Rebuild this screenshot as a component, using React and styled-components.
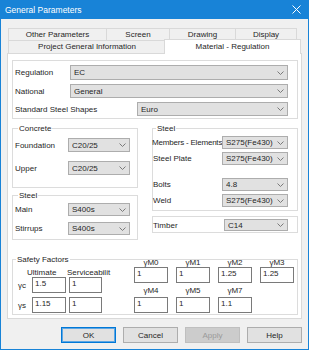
import React from 'react';
import styled, { createGlobalStyle } from 'styled-components';

const FONT = '"Liberation Sans", Arial, sans-serif'

const GlobalStyle = createGlobalStyle`
  html, body {
    margin: 0;
    padding: 0;
    background: #ffffff;
  }
  body {
    font-family: ${FONT};
    font-size: 8px;
    color: #262626;
  }
  * {
    box-sizing: border-box;
  }
`

const Chevron = () => (
  <svg width="7" height="4" viewBox="0 0 7 4">
    <polyline points="0.5,0.5 3.5,3.5 6.5,0.5" fill="none" stroke="#7a7a7a" strokeWidth="1" />
  </svg>
)

const CloseIcon = () => (
  <svg width="9" height="9" viewBox="0 0 9 9">
    <path d="M0.5 0.5 L8.5 8.5 M8.5 0.5 L0.5 8.5" stroke="#fff" strokeWidth="1" />
  </svg>
)

const Select = ({ value, w, h }) => (
  <Combo $w={w} $h={h}>
    <ComboValue>{value}</ComboValue>
    <ComboArrow><Chevron /></ComboArrow>
  </Combo>
)

const App = () => {
  return (
    <>
      <GlobalStyle />
      <Window>
        <TitleBar>
          <span>General Parameters</span>
          <CloseButton><CloseIcon /></CloseButton>
        </TitleBar>
        <Body>
          <Tabs>
            <TabRow>
              <Tab $w={99}>Other Parameters</Tab>
              <Tab $w={64}>Screen</Tab>
              <Tab $w={67}>Drawing</Tab>
              <Tab $w={62}>Display</Tab>
            </TabRow>
            <TabRow>
              <Tab $w={158} $h={13}>Project General Information</Tab>
              <Tab $w={137} $h={13} $active>Material - Regulation</Tab>
            </TabRow>
          </Tabs>
          <Panel>
            <Box>
              <FormRow>
                <Label $w={55}>Regulation</Label>
                <Select value="EC" h={15} />
              </FormRow>
              <FormRow $mt={4}>
                <Label $w={55}>National</Label>
                <Select value="General" />
              </FormRow>
              <FormRow $mt={4}>
                <Label>Standard Steel Shapes</Label>
                <Select value="Euro" w={151} />
              </FormRow>
            </Box>

            <Columns>
              <Column>
                <Group $pad="5px 7px 12px 2px">
                  <Legend>Concrete</Legend>
                  <FormRow>
                    <Label>Foundation</Label>
                    <Select value="C20/25" w={62} />
                  </FormRow>
                  <FormRow $mt={9}>
                    <Label>Upper</Label>
                    <Select value="C20/25" w={62} />
                  </FormRow>
                </Group>
                <Group $pad="3px 7px 4px 2px" $mt={3}>
                  <Legend>Steel</Legend>
                  <FormRow>
                    <Label>Main</Label>
                    <Select value="S400s" w={62} h={13} />
                  </FormRow>
                  <FormRow $mt={6}>
                    <Label>Stirrups</Label>
                    <Select value="S400s" w={62} h={13} />
                  </FormRow>
                </Group>
              </Column>
              <Column>
                <Group $pad="3px 9px 3px 0">
                  <Legend>Steel</Legend>
                  <FormRow>
                    <Label $tight>Members - Elements</Label>
                    <Select value="S275(Fe430)" w={66} h={13} />
                  </FormRow>
                  <FormRow $mt={3}>
                    <Label>Steel Plate</Label>
                    <Select value="S275(Fe430)" w={66} h={13} />
                  </FormRow>
                  <FormRow $mt={13}>
                    <Label>Bolts</Label>
                    <Select value="4.8" w={66} h={13} />
                  </FormRow>
                  <FormRow $mt={3}>
                    <Label>Weld</Label>
                    <Select value="S275(Fe430)" w={66} h={13} />
                  </FormRow>
                </Group>
                <Box $pad="2px 9px 1px 0" $mt={5}>
                  <FormRow>
                    <Label>Timber</Label>
                    <Select value="C14" w={64} h={12} />
                  </FormRow>
                </Box>
              </Column>
            </Columns>

            <Group $pad="0 3px 1px 0" $mt={15}>
              <Legend>Safety Factors</Legend>
              <Factors>
                <Limits>
                  <LimitHeader>
                    <span />
                    <HeadText $shift={-5}>Ultimate</HeadText>
                    <HeadText $shift={-2}>Serviceabilit</HeadText>
                  </LimitHeader>
                  <LimitRow>
                    <Symbol>γc</Symbol>
                    <Field readOnly value="1.5" />
                    <Field readOnly value="1" />
                  </LimitRow>
                  <LimitRow $mt={4}>
                    <Symbol>γs</Symbol>
                    <Field readOnly value="1.15" />
                    <Field readOnly value="1" />
                  </LimitRow>
                </Limits>
                <Partials>
                  <PartialLabel>γM0</PartialLabel>
                  <PartialLabel>γM1</PartialLabel>
                  <PartialLabel>γM2</PartialLabel>
                  <PartialLabel>γM3</PartialLabel>
                  <Field readOnly value="1" />
                  <Field readOnly value="1" />
                  <Field readOnly value="1.25" />
                  <Field readOnly value="1.25" />
                  <PartialLabel>γM4</PartialLabel>
                  <PartialLabel>γM5</PartialLabel>
                  <PartialLabel>γM7</PartialLabel>
                  <span />
                  <Field readOnly value="1" />
                  <Field readOnly value="1" />
                  <Field readOnly value="1.1" />
                </Partials>
              </Factors>
            </Group>
          </Panel>

          <Buttons>
            <Button $default>OK</Button>
            <Button>Cancel</Button>
            <Button disabled>Apply</Button>
            <Button>Help</Button>
          </Buttons>
        </Body>
      </Window>
    </>
  )
}

export default App;

const Window = styled.div`
  width: 309px;
  height: 350px;
  border: 1px solid #1883d7;
  border-top: none;
  background: #f0f0f0;
  display: flex;
  flex-direction: column;
`

const TitleBar = styled.div`
  height: 19px;
  background: #1883d7;
  color: #fff;
  font-size: 8.5px;
  display: flex;
  align-items: center;
  padding-left: 4px;
`

const CloseButton = styled.span`
  margin-left: auto;
  margin-right: 7px;
  display: flex;
`

const Body = styled.div`
  flex: 1;
  padding: 9px 6px 0;
`

const Tabs = styled.div`
  margin-left: 1px;
`

const TabRow = styled.div`
  display: flex;
  align-items: flex-end;
`

const Tab = styled.div`
  width: ${({ $w }) => $w}px;
  height: ${({ $active, $h }) => ($active ? ($h || 12) + 2 : ($h || 12))}px;
  margin-top: ${({ $active }) => ($active ? '-2px' : '0')};
  margin-right: -1px;
  margin-bottom: ${({ $active }) => ($active ? '-1px' : '0')};
  margin-left: ${({ $active }) => ($active ? '-1px' : '0')};
  border: 1px solid #d9d9d9;
  border-bottom: ${({ $active }) => ($active ? 'none' : '0')};
  background: ${({ $active }) => ($active ? '#fff' : '#f0f0f0')};
  position: relative;
  z-index: ${({ $active }) => ($active ? 1 : 0)};
  display: flex;
  justify-content: center;
  align-items: ${({ $active }) => ($active ? 'flex-start' : 'center')};
  padding-top: ${({ $active }) => ($active ? '2px' : '0')};
  padding-bottom: ${({ $active }) => ($active ? '0' : '1px')};
  white-space: nowrap;
`

const Panel = styled.div`
  height: 266px;
  background: #fff;
  border: 1px solid #d9d9d9;
  padding: 6px 3px 0 4px;
`

const Box = styled.div`
  border: 1px solid #dcdcdc;
  padding: ${({ $pad }) => $pad || '4px 9px 2px 2px'};
  margin-top: ${({ $mt }) => $mt || 0}px;
`

const Group = styled.fieldset`
  margin: ${({ $mt }) => $mt || 0}px 0 0;
  padding: ${({ $pad }) => $pad};
  border: 1px solid #dcdcdc;
  min-width: 0;
`

const Legend = styled.legend`
  padding: 0 1px;
  margin-left: 3px;
  line-height: 9px;
`

const FormRow = styled.div`
  display: flex;
  align-items: center;
  margin-top: ${({ $mt }) => $mt || 0}px;
`

const Label = styled.span`
  ${({ $w }) => ($w ? `width: ${$w}px; flex-shrink: 0;` : 'flex: 1; min-width: 0;')}
  letter-spacing: ${({ $tight }) => ($tight ? '-0.2px' : 'normal')};
  margin-left: ${({ $tight }) => ($tight ? '-1px' : '0')};
  white-space: nowrap;
`

const Combo = styled.div`
  display: flex;
  align-items: center;
  ${({ $w }) => ($w ? `width: ${$w}px; flex-shrink: 0;` : 'flex: 1;')}
  height: ${({ $h }) => $h || 14}px;
  background: #e1e1e1;
  border: 1px solid #adadad;
  padding-left: 3px;
`

const ComboValue = styled.span`
  flex: 1;
  overflow: hidden;
  white-space: nowrap;
`

const ComboArrow = styled.span`
  width: 14px;
  display: flex;
  justify-content: center;
`

const Columns = styled.div`
  display: grid;
  grid-template-columns: 126px 146px;
  column-gap: 14px;
  align-items: start;
  margin-top: 5px;
`

const Column = styled.div`
  display: flex;
  flex-direction: column;
`

const Factors = styled.div`
  display: flex;
  align-items: flex-start;
`

const Limits = styled.div`
  display: flex;
  flex-direction: column;
`

const LimitHeader = styled.div`
  display: grid;
  grid-template-columns: 16px 34px 33px;
  column-gap: 3px;
  height: 13px;
  align-items: end;
  line-height: 9px;
`

const HeadText = styled.span`
  margin-left: ${({ $shift }) => $shift}px;
  white-space: nowrap;
`

const LimitRow = styled.div`
  display: grid;
  grid-template-columns: 16px 34px 33px;
  column-gap: 3px;
  align-items: center;
  margin-top: ${({ $mt }) => $mt || 0}px;
`

const Symbol = styled.span`
  padding-left: 5px;
`

const Field = styled.input`
  width: 100%;
  height: 16px;
  border: 1px solid #7a7a7a;
  background: #fff;
  font-family: ${FONT};
  font-size: 8px;
  color: #262626;
  padding: 0 2px 3px;
  margin: 0;
  outline: none;
`

const Partials = styled.div`
  display: grid;
  grid-template-columns: repeat(4, 34px);
  grid-template-rows: 9px 16px 14px 16px;
  column-gap: 8px;
  margin-left: 32px;
  margin-top: -6px;
`

const PartialLabel = styled.span`
  text-align: center;
  align-self: center;
  line-height: 9px;
`

const Buttons = styled.div`
  display: flex;
  justify-content: flex-end;
  gap: 7px;
  margin-top: 8px;
`

const Button = styled.button`
  width: 55px;
  height: 16px;
  padding: 0;
  font-family: ${FONT};
  font-size: 8px;
  color: #262626;
  background: #e1e1e1;
  border: 1px solid ${({ $default }) => ($default ? '#0078d7' : '#adadad')};
  box-shadow: ${({ $default }) => ($default ? 'inset 0 0 0 1px #5ea6e3' : 'none')};

  &:disabled {
    background: #cccccc;
    border-color: #bfbfbf;
    color: #9a9a9a;
  }
`
